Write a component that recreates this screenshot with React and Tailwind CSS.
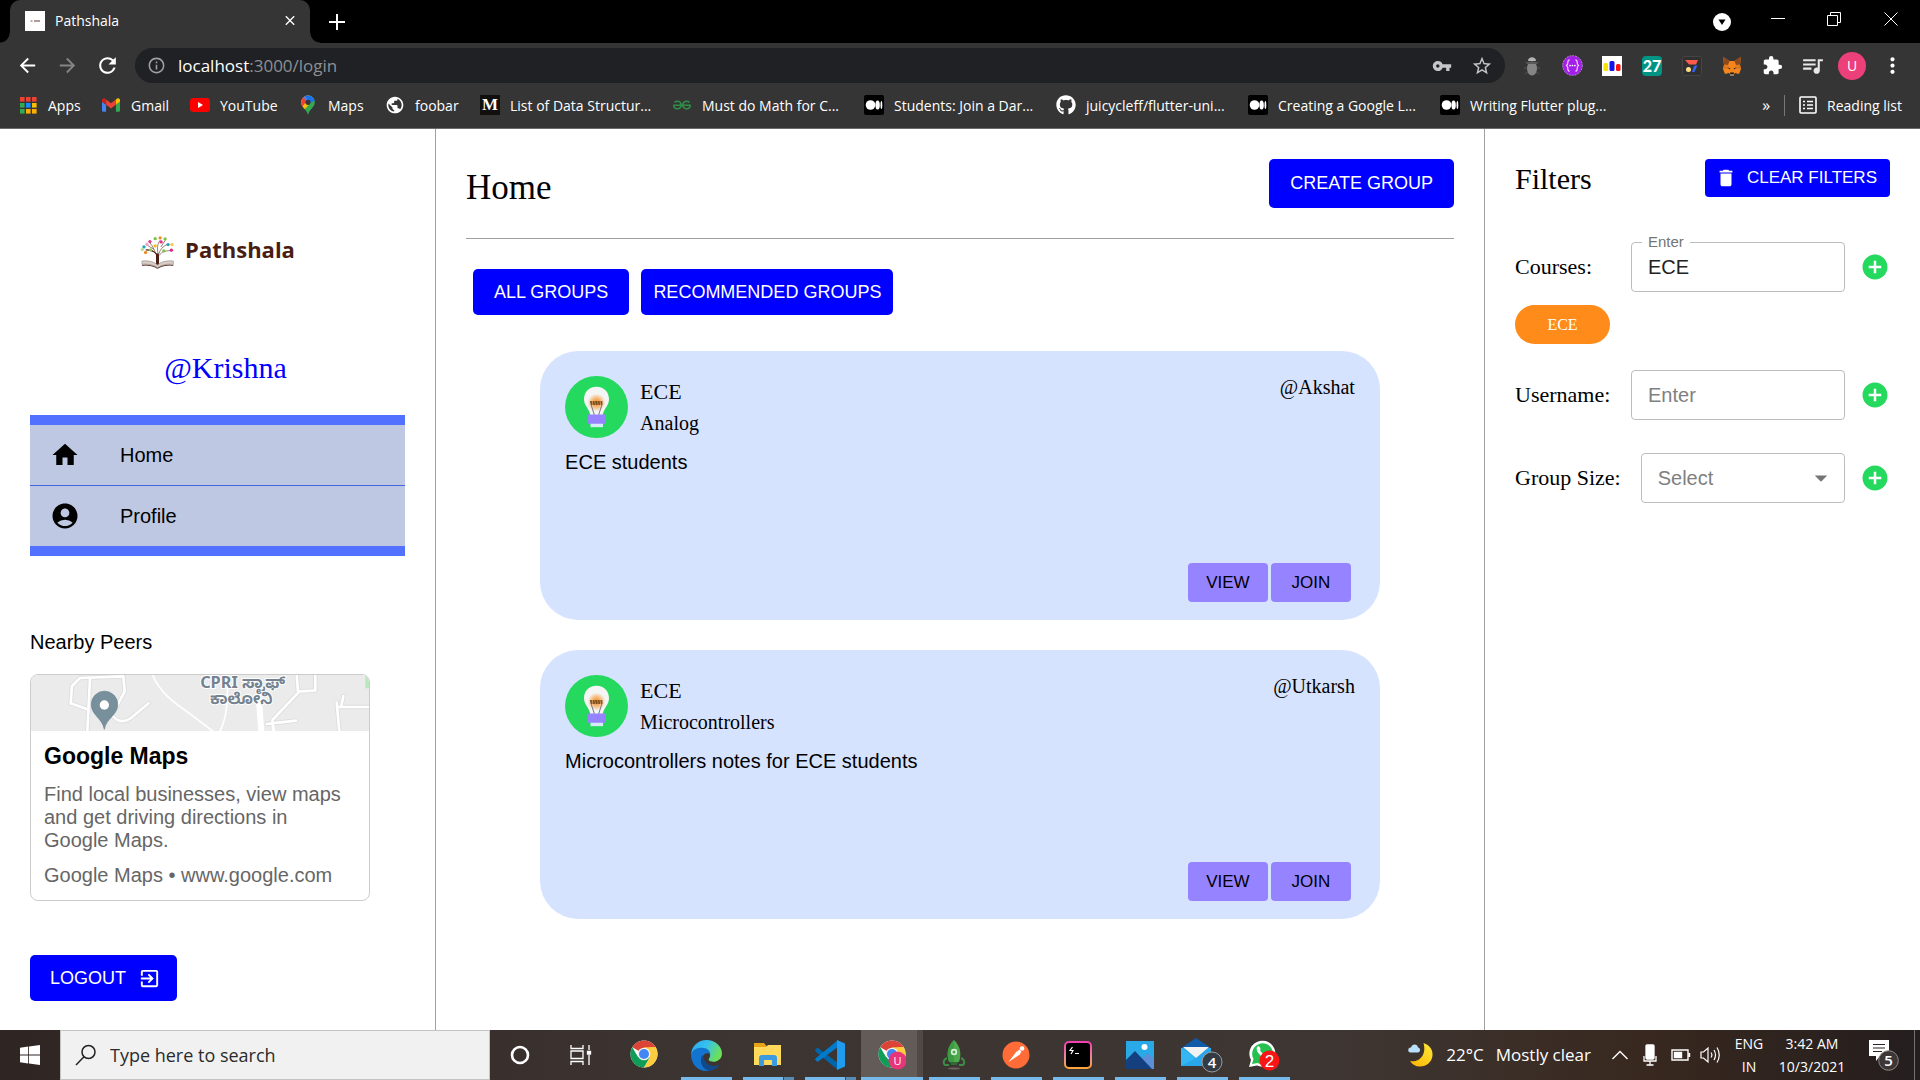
import React, { useState } from "react";
import {
  MdAccountCircle,
  MdAddCircle,
  MdArrowBack,
  MdArrowDropDown,
  MdArrowForward,
  MdClose,
  MdDelete,
  MdExitToApp,
  MdExtension,
  MdHome,
  MdInfoOutline,
  MdMoreVert,
  MdPublic,
  MdQueueMusic,
  MdRefresh,
  MdStarBorder,
  MdVpnKey,
} from "react-icons/md";
import { FaGithub } from "react-icons/fa";
import { SiGeeksforgeeks } from "react-icons/si";

/* ---------- Browser icons ---------- */

function AppsIcon() {
  const colors = ["#ea4335", "#ea4335", "#ea4335", "#34a853", "#1a8cff", "#fbbc04", "#34a853", "#fbaf04", "#fbaf04"];
  return (
    <svg viewBox="0 0 20 20" className="h-5 w-5">
      {colors.map((c, i) => (
        <rect key={i} x={2 + (i % 3) * 6} y={2 + Math.floor(i / 3) * 6} width="4.6" height="4.6" fill={c} />
      ))}
    </svg>
  );
}

function GmailIcon() {
  return (
    <svg viewBox="52 42 88 66" className="h-5 w-[18px]">
      <path fill="#4285f4" d="M58 108h14V74L52 59v43c0 3.32 2.69 6 6 6" />
      <path fill="#34a853" d="M120 108h14c3.32 0 6-2.69 6-6V59l-20 15" />
      <path fill="#fbbc04" d="M120 48v26l20-15v-8c0-7.42-8.47-11.65-14.4-7.2" />
      <path fill="#ea4335" d="M72 74V48l24 18 24-18v26L96 92" />
      <path fill="#c5221f" d="M52 51v8l20 15V48l-5.6-4.2c-5.94-4.45-14.4-.22-14.4 7.2" />
    </svg>
  );
}

function YouTubeIcon() {
  return (
    <svg viewBox="0 0 20 20" className="h-5 w-5">
      <rect x="0" y="3" width="20" height="14" rx="3.5" fill="#ff0000" />
      <path d="M8 7v6l5-3z" fill="#fff" />
    </svg>
  );
}

function MapsIcon() {
  return (
    <svg viewBox="0 0 20 20" className="h-5 w-5">
      <defs>
        <clipPath id="pin">
          <path d="M10 .5A6.8 6.8 0 0 0 3.2 7.3c0 5 5 6.500 6.800 12.700 1.800-6.200 6.800-7.700 6.800-12.700A6.8 6.8 0 0 0 10 .5z" />
        </clipPath>
      </defs>
      <g clipPath="url(#pin)">
        <rect width="20" height="20" fill="#34a853" />
        <path d="M0 0h20L4 17 0 10z" fill="#fbbc04" />
        <path d="M0 0h14L3 13z" fill="#ea4335" />
        <path d="M5 0h15L9 9z" fill="#4285f4" />
        <path d="M6 0h14v4l-8 4z" fill="#1a73e8" />
      </g>
      <circle cx="10" cy="7.3" r="2.6" fill="#353535" />
    </svg>
  );
}

function MediumLetterIcon() {
  return (
    <span className="flex h-5 w-5 items-center justify-center bg-[#12100e] font-['Liberation_Serif',serif] text-[17px] font-bold leading-5 text-white">
      M
    </span>
  );
}

function MediumDotsIcon() {
  return (
    <svg viewBox="0 0 20 20" className="h-5 w-5">
      <rect width="20" height="20" rx="2" fill="#000" />
      <circle cx="6.500" cy="10" r="4.800" fill="#fff" />
      <ellipse cx="13.600" cy="10" rx="2.200" ry="4.600" fill="#fff" />
      <ellipse cx="17.400" cy="10" rx=".9" ry="4" fill="#fff" />
    </svg>
  );
}

const bookmarks = [
  { label: "Apps", icon: <AppsIcon />, width: "w-[83px]" },
  { label: "Gmail", icon: <GmailIcon />, width: "w-[89px]" },
  { label: "YouTube", icon: <YouTubeIcon />, width: "w-[108px]" },
  { label: "Maps", icon: <MapsIcon />, width: "w-[87px]" },
  { label: "foobar", icon: <MdPublic size={22} className="text-white" />, width: "w-[95px]" },
  { label: "List of Data Structur...", icon: <MediumLetterIcon />, width: "w-48" },
  { label: "Must do Math for C...", icon: <SiGeeksforgeeks size={18} className="text-[#2f8d46]" />, width: "w-48" },
  { label: "Students: Join a Dar...", icon: <MediumDotsIcon />, width: "w-48" },
  { label: "juicycleff/flutter-uni...", icon: <FaGithub size={20} className="text-white" />, width: "w-48" },
  { label: "Creating a Google L...", icon: <MediumDotsIcon />, width: "w-48" },
  { label: "Writing Flutter plug...", icon: <MediumDotsIcon />, width: "w-48" },
];

const extensions = [
  {
    name: "Debugger",
    icon: (
      <svg viewBox="0 0 20 24" className="h-6 w-5">
        <g stroke="#555" strokeWidth="1">
          <path d="M3 8l3 2M17 8l-3 2M2 14h4M18 14h-4M3 20l3-2M17 20l-3-2" />
        </g>
        <path d="M6 7c0-5 8-5 8 0z" fill="#b5b5b5" />
        <ellipse cx="10" cy="14.500" rx="5" ry="7" fill="#858585" />
        <path d="M5 8h10v2H5z" fill="#5a5a5a" />
      </svg>
    ),
  },
  {
    name: "GraphQL",
    icon: (
      <svg viewBox="0 0 22 22" className="h-[21px] w-[21px]">
        <circle cx="11" cy="11" r="10.300" fill="#a31ee8" stroke="#d79bf5" strokeWidth=".8" strokeDasharray="2 1" />
        <path d="M8 5c-2 0-2 1.500-2 3.500S5.500 11 4 11c1.500 0 2 .5 2 2.500S6 17 8 17M14 5c2 0 2 1.500 2 3.500s.5 2.500 2 2.500c-1.500 0-2 .5-2 2.500S16 17 14 17" fill="none" stroke="#e9c8fa" strokeWidth="1.300" />
        <g fill="#fff">
          <circle cx="8.500" cy="11" r=".9" />
          <circle cx="11" cy="11" r=".9" />
          <circle cx="13.500" cy="11" r=".9" />
        </g>
      </svg>
    ),
  },
  {
    name: "Charts",
    icon: (
      <svg viewBox="0 0 20 20" className="h-5 w-5">
        <rect width="20" height="20" fill="#fff" />
        <rect x="1.500" y="7" width="4.500" height="8" rx="1.500" fill="#f5e400" />
        <rect x="7.500" y="5" width="5" height="10" rx="1.500" fill="#1414e6" />
        <rect x="14" y="8" width="4.500" height="7" rx="1.500" fill="#ff1010" />
      </svg>
    ),
  },
  {
    name: "Calendar",
    icon: (
      <span className="flex h-5 w-5 items-center justify-center rounded-sm bg-[#009485] font-['Lato',sans-serif] text-[16px] font-black leading-5 text-white">
        27
      </span>
    ),
  },
  {
    name: "Toggl",
    icon: (
      <svg viewBox="0 0 20 20" className="h-5 w-5">
        <rect x=".5" y=".5" width="19" height="19" rx="2" fill="#303030" stroke="#444" />
        <path d="M3 4h13l-2 4.500H7z" fill="#ff5a4a" />
        <circle cx="6.500" cy="13.500" r="2.500" fill="#ffe08a" />
        <path d="M12 10l3.500-1-3 7H10z" fill="#3564f0" />
      </svg>
    ),
  },
  {
    name: "MetaMask",
    icon: (
      <svg viewBox="0 0 20 20" className="h-5 w-5">
        <path d="M1 1l6.500 4h5L19 1l-1 8 1 4-2 5-4-1-1.500 1.500h-3L7 17l-4 1-2-5 1-4z" fill="#f6851b" />
        <path d="M1 1l6.500 4L6 9 2 8.500zM19 1l-6.500 4L14 9l4-.5z" fill="#8e4a1c" />
        <path d="M2 9l5 1-1 3-5 0zM18 9l-5 1 1 3 5 0z" fill="#e2761b" />
        <path d="M5.500 11.500l3 .8-.8 1.200zM14.500 11.500l-3 .8.8 1.200z" fill="#233447" />
        <path d="M8 16.500h4L11.500 18.500h-3z" fill="#161616" />
        <path d="M8 18.500h4v1H8z" fill="#d7c1b3" />
      </svg>
    ),
  },
  { name: "Extensions", icon: <MdExtension size={21} className="text-white" /> },
  { name: "Media", icon: <MdQueueMusic size={25} className="text-[#e8e8e8]" /> },
];

function BrowserChrome() {
  return (
    <header className="bg-[#353535] font-['Open_Sans','Noto_Sans',sans-serif] text-[14px] text-white">
      <div className="flex h-[43px] items-stretch bg-black pl-[10px]">
        <div className="relative flex w-[300px] items-center rounded-t-[10px] bg-[#353535] pb-[2px] pl-[15px] pr-3">
          <span className="absolute bottom-0 -left-[10px] h-[10px] w-[10px] bg-[radial-gradient(circle_at_0_0,transparent_9px,#353535_10px)]" />
          <span className="absolute -right-[10px] bottom-0 h-[10px] w-[10px] bg-[radial-gradient(circle_at_100%_0,transparent_9px,#353535_10px)]" />
          <svg viewBox="0 0 20 20" className="h-5 w-5">
            <rect width="20" height="20" fill="#fff" />
            <path d="M5.500 10h2" stroke="#999" strokeWidth="1.500" />
            <path d="M9 10h6" stroke="#9a7a74" strokeWidth="1.500" />
          </svg>
          <span className="ml-[10px] flex-1">Pathshala</span>
          <button aria-label="Close tab" className="flex w-4 justify-center">
            <MdClose size={17} />
          </button>
        </div>
        <button aria-label="New tab" className="ml-[18px] flex w-[18px] items-center justify-center">
          <svg viewBox="0 0 16 16" className="h-4 w-4" stroke="#fff" strokeWidth="2">
            <path d="M8 0v16M0 8h16" />
          </svg>
        </button>
        <div className="flex-1" />
        <div className="flex items-start">
          <button aria-label="Tab search" className="flex h-[43px] w-14 items-center justify-center">
            <svg viewBox="0 0 18 18" className="h-[18px] w-[18px]">
              <circle cx="9" cy="9" r="9" fill="#fff" />
              <path d="M5.500 6.500h7L9 12z" fill="#000" />
            </svg>
          </button>
          <button aria-label="Minimize" className="flex h-9 w-14 items-center justify-center">
            <svg viewBox="0 0 14 14" className="h-[14px] w-[14px]" stroke="#fff">
              <path d="M0 7.500h14" />
            </svg>
          </button>
          <button aria-label="Restore" className="flex h-[38px] w-14 items-center justify-center">
            <svg viewBox="0 0 14 14" className="h-[14px] w-[14px]" fill="none" stroke="#fff">
              <path d="M.5 3.500h10v10H.5zM3.500 3V.5h10v10H11" />
            </svg>
          </button>
          <button aria-label="Close" className="flex h-[38px] w-[58px] items-center justify-center">
            <svg viewBox="0 0 14 14" className="h-[14px] w-[14px]" fill="none" stroke="#fff">
              <path d="M.5.5l13 13M13.500.5l-13 13" />
            </svg>
          </button>
        </div>
      </div>

      <div className="flex h-[45px] items-center pr-2 pl-[7px]">
        <button aria-label="Back" className="flex w-10 justify-center">
          <MdArrowBack size={23} />
        </button>
        <button aria-label="Forward" className="flex w-10 justify-center text-[#858585]">
          <MdArrowForward size={23} />
        </button>
        <button aria-label="Reload" className="flex w-10 justify-center">
          <MdRefresh size={25} />
        </button>
        <div className="ml-2 flex h-[35px] flex-1 items-center rounded-full bg-[#202124] pr-[3px]">
          <MdInfoOutline size={19} className="mx-3 text-[#9aa0a6]" />
          <a href="#login" className="flex-1 text-[17px] leading-6 text-[#8d9093]">
            <span className="text-white">localhost</span>:3000/login
          </a>
          <button aria-label="Passwords" className="flex w-10 justify-center text-[#c4c7c9]">
            <MdVpnKey size={20} />
          </button>
          <button aria-label="Bookmark this page" className="flex w-10 justify-center text-[#c4c7c9]">
            <MdStarBorder size={22} />
          </button>
        </div>
        <div className="ml-[7px] flex items-center">
          {extensions.map((e) => (
            <button key={e.name} aria-label={e.name} className="flex w-10 items-center justify-center">
              {e.icon}
            </button>
          ))}
          <button aria-label="Account" className="flex w-10 justify-center">
            <span className="h-7 w-7 rounded-full bg-[#ec407a] text-center leading-7">U</span>
          </button>
          <button aria-label="Menu" className="flex w-10 justify-center">
            <MdMoreVert size={25} />
          </button>
        </div>
      </div>

      <nav className="flex h-[41px] items-center border-b border-[#6b6b6b] pb-[6px] pl-[18px]" aria-label="Bookmarks">
        {bookmarks.map((b) => (
          <a key={b.label} href="#bookmark" className={"flex shrink-0 items-center gap-[10px] " + b.width}>
            <span className="flex w-5 shrink-0 justify-center">{b.icon}</span>
            <span className="whitespace-nowrap">{b.label}</span>
          </a>
        ))}
        <div className="flex-1" />
        <button aria-label="More bookmarks" className="mr-[14px] text-[16px]">»</button>
        <a href="#reading" className="flex items-center border-l border-[#777] pl-[14px] pr-[18px]">
          <svg viewBox="0 0 18 18" className="mr-[10px] h-[18px] w-[18px]" fill="none" stroke="#fff" strokeWidth="1.600">
            <rect x="1" y="1" width="16" height="16" rx="1" />
            <path d="M4 5.500h2M8 5.500h6M4 9h2M8 9h6M4 12.500h2M8 12.500h6" />
          </svg>
          Reading list
        </a>
      </nav>
    </header>
  );
}

/* ---------- Left column ---------- */

function TreeLogo() {
  const leaves = [
    [432, 141, "#1fa7b8"], [450, 125, "#e0398a"], [466, 116, "#7cc247"], [481, 114, "#f08a24"], [496, 117, "#7cc247"],
    [505, 134, "#1fa7b8"], [466, 138, "#f5b821"], [484, 126, "#e0398a"], [515, 151, "#d42a7b"], [492, 153, "#7cc247"],
    [437, 158, "#f08a24"], [452, 150, "#8ccf5a"], [517, 134, "#f7c948"], [427, 149, "#b8dc90"], [441, 133, "#f7a6cc"],
  ];
  return (
    <svg viewBox="420 105 106 106" className="h-[35px] w-[35px]">
      <g fill="none" stroke="#6a4035" strokeWidth="4" strokeLinecap="round">
        <path d="M473 196c4-16 2-26-4-34-6-8-14-12-30-12" stroke="#4a1d12" />
        <path d="M467 160c-4-12-8-20-16-30M474 158c-2-14-2-24 6-36M477 162c4-14 12-22 24-28M479 166c8-12 18-12 32-14M462 148l-20-12M484 140l12-18" strokeWidth="2" />
        <path d="M473 198V165" stroke="#4a1d12" strokeWidth="9" />
      </g>
      {leaves.map(([x, y, c], i) => (
        <circle key={i} cx={x} cy={y} r="5" fill={c} />
      ))}
      <path d="M426 184c16-2 34 0 47 12 13-12 32-14 48-12v10c-16-2-34 0-48 10-13-10-32-12-47-10z" fill="#d9cfc9" stroke="#9a8b84" strokeWidth="2" />
      <path d="M426 197c16-2 34 0 47 9 13-9 32-11 48-9" fill="none" stroke="#5f3a2f" strokeWidth="3" />
    </svg>
  );
}

function MapPreview() {
  return (
    <svg viewBox="93 225 1014 168" preserveAspectRatio="xMidYMid slice" className="block h-14 w-full">
      <rect x="93" y="225" width="1014" height="168" fill="#ebebeb" />
      <path d="M1096 225h11v40h-11z" fill="#b9e8c0" />
      <g fill="none" stroke="#dcdcdf" strokeLinejoin="round" strokeLinecap="round">
        <path d="M262 393l8-158M212 310l4-52 24-24 130-5 4 45-26 50M212 310l50 18M340 350c16 18 34 16 50 6l56-46M890 225l4 50 52-4V225M895 278l-78 82M778 300l6 93M800 372l88-10M1107 321h-92M1010 308l8 85M1030 288l-6 30" strokeWidth="13" />
      </g>
      <g fill="none" stroke="#fff" strokeLinejoin="round" strokeLinecap="round">
        <path d="M262 393l8-158M212 310l4-52 24-24 130-5 4 45-26 50M212 310l50 18M340 350c16 18 34 16 50 6l56-46M890 225l4 50 52-4V225M895 278l-78 82 4 33M800 372l88-10M1107 321h-92M1010 308l8 85M1030 288l-6 30" strokeWidth="8" />
        <path d="M458 225c20 50 60 80 110 115l70 53M684 225c-2 90-4 130-24 168" strokeWidth="5" />
        <path d="M776 290l8 103" strokeWidth="18" />
      </g>
      <g fontFamily="'Noto Sans', 'Noto Sans Kannada', sans-serif" fontWeight="700" fill="#74838f" stroke="#fff" strokeWidth="6" paintOrder="stroke" textAnchor="middle">
        <text x="728" y="264" fontSize="49">CPRI ಸ್ಟಾಫ್</text>
        <text x="724" y="311" fontSize="46">ಕಾಲೋನಿ</text>
      </g>
      <path d="M313 388c-6-34-39-42-39-75a39 39 0 0 1 79 0c0 33-34 41-40 75z" fill="#78909c" stroke="#66808c" strokeWidth="2" />
      <circle cx="313" cy="315" r="14" fill="#fff" />
    </svg>
  );
}

function Sidebar() {
  return (
    <aside className="w-[436px] shrink-0 border-r border-[#a0a0a0] px-[30px] pt-[106px] pb-[29px]">
      <a href="#home" className="flex h-[35px] items-center justify-center gap-[10px]">
        <TreeLogo />
        <span className="pb-2 font-['Open_Sans',sans-serif] text-[22px] font-bold leading-[30px] text-[#4a1d12]">Pathshala</span>
      </a>
      <h2 className="mt-20 pl-4 text-center font-['Liberation_Serif',serif] text-[30px] leading-9 text-[#0000ff]">@Krishna</h2>
      <nav className="mt-[29px] border-y-[10px] border-[#5271ff] text-[20px]">
        <a href="#home" className="flex h-[61px] items-center border-b border-[#4565e0] bg-[#bfc8e2] pl-5">
          <MdHome size={30} />
          <span className="ml-10">Home</span>
        </a>
        <a href="#profile" className="flex h-[60px] items-center bg-[#bfc8e2] pl-5">
          <MdAccountCircle size={30} />
          <span className="ml-10">Profile</span>
        </a>
      </nav>
      <h3 className="mt-[74px] text-[20px] leading-6">Nearby Peers</h3>
      <a href="#maps" className="mt-5 block max-w-[340px] overflow-hidden rounded-lg border border-[#cccccc]">
        <MapPreview />
        <div className="px-[13px] pt-[11px] pb-[13px] text-[20px] leading-[23px] text-[#666666]">
          <h4 className="text-[23px] font-bold leading-7 text-black">Google Maps</h4>
          <p className="mt-[13px]">Find local businesses, view maps and get driving directions in Google Maps.</p>
          <p className="mt-3">Google Maps • www.google.com</p>
        </div>
      </a>
      <button className="mt-[54px] flex h-[46px] items-center gap-3 rounded-[5px] bg-[#0000ff] px-5 pr-[16px] text-[18px] text-white">
        LOGOUT
        <MdExitToApp size={23} />
      </button>
    </aside>
  );
}

/* ---------- Middle column ---------- */

function BulbIcon() {
  return (
    <svg viewBox="0 0 63 63" preserveAspectRatio="none" className="h-[62px] w-[63px] shrink-0">
      <defs>
        <radialGradient id="glow">
          <stop offset="0" stopColor="#ee8a1e" />
          <stop offset=".5" stopColor="#f6b877" />
          <stop offset="1" stopColor="#f4f4f4" />
        </radialGradient>
      </defs>
      <circle cx="31.500" cy="31.500" r="31.500" fill="#25d95f" />
      <path d="M31.500 11c-8 0-12.500 6-12.500 12.500 0 6.500 5 9 6.500 16.500h12c1.500-7.500 6.500-10 6.500-16.500C44 17 39.500 11 31.500 11z" fill="#f5f5f5" />
      <circle cx="31.500" cy="27" r="9" fill="url(#glow)" />
      <path d="M25 26.500h13M25.500 28.500h12" stroke="#5a3410" strokeWidth="1.600" strokeDasharray="2 .6" />
      <path d="M26 29l3.500 11M37 29l-3.500 11" stroke="#777" strokeWidth="1" fill="none" />
      <rect x="25.500" y="46" width="12.500" height="6" fill="#d4ecf8" />
      <rect x="22.500" y="39" width="18.500" height="9.500" rx="1" fill="#9683ff" />
    </svg>
  );
}

const groups = [
  { course: "ECE", topic: "Analog", owner: "@Akshat", description: "ECE students" },
  { course: "ECE", topic: "Microcontrollers", owner: "@Utkarsh", description: "Microcontrollers notes for ECE students" },
];

function GroupCard({ group }) {
  return (
    <article className="flex min-h-[269px] flex-col rounded-[38px] bg-[#d6e3ff] px-[25px] pt-[25px] pb-[18px]">
      <div className="flex items-start font-['Liberation_Serif',serif] text-[20px] leading-[22px]">
        <BulbIcon />
        <div className="ml-3 flex-1 pt-[3px]">
          <h3 className="text-[22px] leading-[26px]">{group.course}</h3>
          <p className="mt-[7px]">{group.topic}</p>
        </div>
        <span>{group.owner}</span>
      </div>
      <p className="mt-3 text-[20px] leading-6">{group.description}</p>
      <div className="mt-auto mr-1 flex justify-end gap-[3px] text-[17px]">
        <button className="h-[39px] w-20 rounded bg-[#9683ff]">VIEW</button>
        <button className="h-[39px] w-20 rounded bg-[#9683ff]">JOIN</button>
      </div>
    </article>
  );
}

function Main() {
  return (
    <main className="min-w-0 flex-1 px-[30px] pt-[30px]">
      <div className="flex items-start justify-between border-b border-[#a0a0a0] pb-[30px]">
        <h1 className="pt-[9px] font-['Liberation_Serif',serif] text-[35px] leading-10">Home</h1>
        <button className="h-[49px] rounded-[5px] bg-[#0000ff] px-[21px] text-[18px] text-white">CREATE GROUP</button>
      </div>
      <div className="mt-[30px] ml-[7px] flex gap-3 text-[18px] text-white">
        <button className="h-[46px] rounded-[5px] bg-[#0000ff] px-[21px]">ALL GROUPS</button>
        <button className="h-[46px] rounded-[5px] bg-[#0000ff] px-3">RECOMMENDED GROUPS</button>
      </div>
      <div className="mx-auto mt-9 flex w-[85%] flex-col gap-[30px]">
        {groups.map((g) => (
          <GroupCard key={g.topic} group={g} />
        ))}
      </div>
    </main>
  );
}

/* ---------- Right column ---------- */

function AddButton({ name }) {
  return (
    <button aria-label={name} className="ml-[15px] text-[#25d95f]">
      <MdAddCircle size={30} />
    </button>
  );
}

const fieldLabel = "mr-5 min-w-24 font-['Liberation_Serif',serif] text-[22px] leading-[26px]";
const fieldBox = "h-[50px] w-full rounded border border-[#bdbdbd] bg-white px-4 text-[20px] outline-none";

function Filters() {
  const [course, setCourse] = useState("ECE");
  return (
    <aside className="w-[436px] shrink-0 border-l border-[#a0a0a0] px-[30px] pt-[30px]">
      <div className="flex items-start justify-between">
        <h2 className="pt-[2px] font-['Liberation_Serif',serif] text-[30px] leading-9">Filters</h2>
        <button className="flex h-[38px] items-center rounded bg-[#0000ff] pr-[13px] pl-[10px] text-[17px] text-white">
          <MdDelete size={22} />
          <span className="ml-[10px]">CLEAR FILTERS</span>
        </button>
      </div>

      <div className="mt-[45px] flex items-center">
        <label htmlFor="courses" className={fieldLabel}>Courses:</label>
        <div className="relative min-w-0 flex-1">
          <input id="courses" value={course} onChange={(e) => setCourse(e.target.value)} className={fieldBox + " block text-[#212121]"} />
          <span className="absolute -top-[9px] left-[11px] bg-white px-[6px] text-[15px] leading-[18px] text-[#757575]">Enter</span>
        </div>
        <AddButton name="Add course" />
      </div>
      <button className="mt-[13px] block h-[39px] w-[95px] rounded-full bg-[#ff8c1a] font-['Liberation_Serif',serif] text-[16px] text-white">
        ECE
      </button>

      <div className="mt-[26px] flex items-center">
        <label htmlFor="username" className={fieldLabel}>Username:</label>
        <div className="min-w-0 flex-1">
          <input id="username" placeholder="Enter" className={fieldBox + " block placeholder:text-[#808080]"} />
        </div>
        <AddButton name="Add username" />
      </div>

      <div className="mt-[33px] flex items-center">
        <label htmlFor="size" className={fieldLabel + " whitespace-nowrap"}>Group Size:</label>
        <div className="relative min-w-0 flex-1">
          <select id="size" defaultValue="" className={fieldBox + " block appearance-none text-[#808080]"}>
            <option value="">Select</option>
          </select>
          <MdArrowDropDown size={30} className="pointer-events-none absolute top-[10px] right-[9px] text-[#757575]" />
        </div>
        <AddButton name="Add group size" />
      </div>
    </aside>
  );
}

/* ---------- Taskbar ---------- */

function ChromeLogo({ badge }) {
  return (
    <svg viewBox="0 0 28 30" className="h-[30px] w-7">
      <circle cx="14" cy="14" r="13.500" fill="#fff" />
      <path d="M14 14L2.300 7.250A13.500 13.500 0 0 1 25.700 7.250z" fill="#db4437" />
      <path d="M2.300 7.250A13.500 13.500 0 0 0 14 27.500l6-10.200L8.200 17.300z" fill="#0f9d58" />
      <path d="M25.700 7.250A13.500 13.500 0 0 1 14 27.500l6-10.200V7.250z" fill="#ffcd40" />
      <path d="M14 7.250h11.700L20 17z" fill="#ffcd40" />
      <circle cx="14" cy="14" r="6.300" fill="#f1f1f1" />
      <circle cx="14" cy="14" r="5" fill="#4285f4" />
      {badge && (
        <g>
          <circle cx="19.500" cy="20.500" r="9" fill="#e8357a" />
          <text x="19.500" y="24.500" textAnchor="middle" fontSize="11" fill="#fff" fontFamily="Open Sans, sans-serif">U</text>
        </g>
      )}
    </svg>
  );
}

function EdgeLogo() {
  return (
    <svg viewBox="0 0 30 30" className="h-[31px] w-[31px]">
      <defs>
        <linearGradient id="edgeTop" x1="0" x2="1" y1="0" y2=".4">
          <stop offset="0" stopColor="#2aa7e8" />
          <stop offset=".5" stopColor="#35c1f1" />
          <stop offset="1" stopColor="#6be05a" />
        </linearGradient>
      </defs>
      <path d="M0 15C0 6 7 0 15 0s15 6 15 13c0 5-4 8-8.500 8-4 0-5.500-1.500-3.500-4C20 13 16 9 11 9 5 9 1 12 0 15z" fill="url(#edgeTop)" />
      <path d="M0 14c1-4 5-6.500 10.500-6.500C16 7.500 19 11 18.500 14c-1-2-7-2-7 3.500 0 6 7 10.500 15 7C24 28 20 30 15 30 6 30 0 23 0 14z" fill="#1374d0" />
      <path d="M11.500 14.500C8 18 9 27 17 29.800c5-.4 8.500-3 10.500-6-5 3-14.500 1.500-16-9.300z" fill="#114a8b" />
    </svg>
  );
}

function ExplorerLogo() {
  return (
    <svg viewBox="0 0 28 30" className="h-[30px] w-7">
      <path d="M0 3h10l2.500 3H27v19H0z" fill="#e8a317" />
      <path d="M0 7h12l2-2h13v20H0z" fill="#ffd95c" />
      <path d="M5 26V18q0-3 3-3h12q3 0 3 3v8h-5v-6h-8v6z" fill="#3c9be0" />
    </svg>
  );
}

function CodeLogo() {
  return (
    <svg viewBox="0 0 30 30" className="h-[30px] w-[30px]">
      <path d="M0 10l2.500-2.500L23 23v7L1 12z" fill="#0065a9" />
      <path d="M0 19.500L2.500 22 23 7V0L1 18z" fill="#007acc" />
      <path d="M22 0l8 3.500v23L22 30z" fill="#1f9cf0" />
    </svg>
  );
}

function MongoCompassLogo() {
  return (
    <svg viewBox="0 0 28 30" className="h-[30px] w-7">
      <path d="M7 18c-4 2-4 5-2 7h4M21 18c4 2 4 5 2 7h-4" fill="none" stroke="#3d8b45" strokeWidth="2" />
      <path d="M14 0c6 6 8 13 5 22H9C6 13 8 6 14 0z" fill="#4fa94d" />
      <path d="M14 0c-6 6-8 13-5 22h5z" fill="#3f9a44" />
      <path d="M10 22h8l-1 3h-6z" fill="#2f6b35" />
      <circle cx="14" cy="12" r="3.200" fill="#d8f0d8" />
      <circle cx="14" cy="12" r="1.500" fill="#4fa94d" />
      <ellipse cx="14" cy="28.500" rx="6" ry="1" fill="#6d635f" />
    </svg>
  );
}

function PostmanLogo() {
  return (
    <svg viewBox="0 0 28 28" className="h-7 w-7">
      <circle cx="14" cy="14" r="13.500" fill="#ff6c37" />
      <path d="M6.500 21l8-10.500 3.500 3z" fill="#fff" />
      <path d="M14.500 11l3-2.500 2 2.500-2 2.500z" fill="#fff" />
      <circle cx="20" cy="7.500" r="2.300" fill="#fff" />
    </svg>
  );
}

function TerminalLogo() {
  return (
    <svg viewBox="0 0 28 28" className="h-7 w-7">
      <defs>
        <linearGradient id="hyper" x1="0" x2="0" y1="0" y2="1">
          <stop offset="0" stopColor="#f43fb0" />
          <stop offset=".6" stopColor="#e88a9a" />
          <stop offset="1" stopColor="#ffa53c" />
        </linearGradient>
      </defs>
      <rect x="1" y="1" width="26" height="26" rx="4" fill="#000" stroke="url(#hyper)" strokeWidth="2" />
      <path d="M8.500 6L6 9.500h3L7 13M11 12.500h4" fill="none" stroke="#fff" strokeWidth="1.200" />
    </svg>
  );
}

function PhotosLogo() {
  return (
    <svg viewBox="0 0 28 28" className="h-7 w-7">
      <rect width="28" height="28" fill="#2aa9e8" />
      <path d="M14 28V19l8-7 6 6v10z" fill="#5b8fd8" />
      <path d="M0 19l9-9 17 18H0z" fill="#15407f" />
      <circle cx="18.500" cy="6" r="3" fill="#fff" />
    </svg>
  );
}

function MailLogo() {
  return (
    <svg viewBox="0 0 42 36" className="h-9 w-[42px]">
      <path d="M0 11L15 1l15 10v3H0z" fill="#0f5ba8" />
      <path d="M0 11h30v18H0z" fill="#28a8ea" />
      <path d="M2 10h26L15 21z" fill="#f2f2f2" />
      <path d="M0 11l15 10L0 29z" fill="#35b6f2" />
      <circle cx="31" cy="25" r="10" fill="#333c44" stroke="#9a9a9a" />
      <text x="31" y="31" textAnchor="middle" fontSize="15" fontWeight="600" fill="#fff" fontFamily="Open Sans, sans-serif">4</text>
    </svg>
  );
}

function WhatsAppLogo() {
  return (
    <svg viewBox="0 0 32 32" className="h-8 w-8">
      <path d="M1 28l2-7A13 13 0 1 1 9 26.500z" fill="#fff" />
      <path d="M4 25l1.500-5A10.500 10.500 0 1 1 9.500 24z" fill="#25c04f" />
      <path d="M9 8c2-2 3 0 3.500 2-1 1.500 0 3 3 5 1.500-1.500 4 0 4 1.500-1 3-5 2.500-8-1-2.500-2.500-3.500-5.500-2.500-7.500z" fill="#fff" />
      <circle cx="21.500" cy="21.500" r="10" fill="#f81515" />
      <text x="21.500" y="27.500" textAnchor="middle" fontSize="17" fill="#fff" fontFamily="Liberation Sans, sans-serif">2</text>
    </svg>
  );
}

const tasks = [
  { name: "Chrome", icon: <ChromeLogo /> },
  { name: "Edge", icon: <EdgeLogo />, open: true },
  { name: "File Explorer", icon: <ExplorerLogo />, open: true, stacked: true },
  { name: "Code", icon: <CodeLogo />, open: true, stacked: true },
  { name: "Chrome profile", icon: <ChromeLogo badge />, active: true },
  { name: "Compass", icon: <MongoCompassLogo />, open: true },
  { name: "Postman", icon: <PostmanLogo />, open: true },
  { name: "Terminal", icon: <TerminalLogo />, open: true },
  { name: "Photos", icon: <PhotosLogo />, open: true },
  { name: "Mail", icon: <MailLogo />, open: true },
  { name: "WhatsApp", icon: <WhatsAppLogo />, open: true },
];

function Taskbar() {
  return (
    <footer className="flex h-[50px] items-stretch bg-[linear-gradient(90deg,#2f2523,#3c3431_35%,#3e3632_70%,#38281f_86%,#241e1e)] font-['Open_Sans','Noto_Sans',sans-serif] text-[14px] text-white">
      <button aria-label="Start" className="flex w-[60px] items-center justify-center">
        <svg viewBox="0 0 20 20" className="h-5 w-5" fill="#fff">
          <path d="M0 2.800l8.200-1.200v8H0zM9 1.500L20 0v9.600H9zM0 10.400h8.200v8L0 17.200zM9 10.400h11V20L9 18.500z" />
        </svg>
      </button>
      <label className="flex w-[430px] items-center border border-[#c4c4c4] bg-[#f1f1f1] pl-[14px]">
        <svg viewBox="0 0 22 22" className="h-[22px] w-[22px]" fill="none" stroke="#222" strokeWidth="1.500">
          <circle cx="13.500" cy="8" r="6.500" />
          <path d="M9 12.800L1 21" />
        </svg>
        <input aria-label="Search" placeholder="Type here to search" className="ml-[13px] min-w-0 flex-1 bg-transparent text-[18px] outline-none placeholder:text-[#2b2b2b]" />
      </label>
      <button aria-label="Cortana" className="flex w-[60px] items-center justify-center">
        <svg viewBox="0 0 20 20" className="h-5 w-5">
          <circle cx="10" cy="10" r="8" fill="none" stroke="#fff" strokeWidth="2.600" />
        </svg>
      </button>
      <button aria-label="Task view" className="mr-[2px] flex w-[61px] items-center justify-center">
        <svg viewBox="0 0 22 20" className="h-5 w-[22px]" fill="none" stroke="#fff" strokeWidth="1.300">
          <path d="M1 0v3.500h12V0M1 20v-3.500h12V20M1 6h12v7.500H1zM19 0v5M19 10v10" />
          <path d="M17.500 6.500h3v2.500h-3z" fill="#fff" />
        </svg>
      </button>
      {tasks.map((t) => (
        <button
          key={t.name}
          aria-label={t.name}
          className={"relative flex w-[62px] items-center justify-center " + (t.active ? "bg-[linear-gradient(90deg,#625b58_56px,#514945_56px)]" : "")}
        >
          {t.icon}
          {t.open && <span className="absolute bottom-0 left-[6px] h-[3px] w-[51px] bg-[#76b9ed]" />}
          {t.stacked && <span className="absolute right-[5px] bottom-0 h-[3px] w-[11px] border-l border-[#3c4a56] bg-[#5a8bb3]" />}
          {t.active && <span className="absolute inset-x-0 bottom-0 h-[3px] bg-[#76b9ed]" />}
        </button>
      ))}
      <div className="flex-1" />
      <div className="flex items-center">
        <button className="flex items-center text-[17px]">
          <svg viewBox="0 0 25 24" className="mr-[13px] h-6 w-[25px]">
            <defs>
              <linearGradient id="moon" x1="0" x2="1" y1="1" y2="0">
                <stop offset="0" stopColor="#ffb300" />
                <stop offset="1" stopColor="#ffe93b" />
              </linearGradient>
            </defs>
            <path d="M15.500 0C22 2 25 7 24.500 12.500 24 19 18.500 23.500 12 23.500c-4.500 0-8-2-10-5.500C11 20 19 12 15.500 0z" fill="url(#moon)" />
            <path d="M2.500 9.500a2.500 2.500 0 0 1 .5-5c1-4 6.500-4 7 0 3 .5 2.500 5 0 5z" fill="#b8e0fb" />
          </svg>
          22°C
          <span className="ml-3">Mostly clear</span>
        </button>
        <button aria-label="Hidden icons" className="ml-5 flex w-[18px] justify-center">
          <svg viewBox="0 0 16 10" className="h-[10px] w-4" fill="none" stroke="#fff" strokeWidth="1.400">
            <path d="M.5 9L8 1.500 15.500 9" />
          </svg>
        </button>
        <svg viewBox="0 0 14 22" className="ml-[14px] h-[22px] w-[14px]" fill="none" stroke="#fff" strokeWidth="1.300">
          <rect x="3" y="1" width="8" height="14" rx="1" fill="#fff" />
          <path d="M1 12v5h12v-5M7 17v4M3.500 21h7" />
        </svg>
        <svg viewBox="0 0 20 12" className="ml-[14px] h-3 w-5" fill="none" stroke="#fff" strokeWidth="1.400">
          <path d="M1 1h16v10H1zM18.500 4v4" />
          <path d="M3.500 3.500h7v5h-7z" fill="#fff" />
        </svg>
        <svg viewBox="0 0 21 18" className="ml-[9px] h-[18px] w-[21px]" fill="none" stroke="#fff" strokeWidth="1.200">
          <path d="M1 6h2.500L8 2v14l-4.500-4H1z" />
          <path d="M11 6.500q1.800 2.500 0 5M14 4q3 5 0 10M17 1.500q4.500 7.500 0 15" />
        </svg>
        <button className="ml-3 w-8 text-center leading-[23px]">
          ENG
          <br />
          IN
        </button>
        <button className="ml-3 w-[70px] text-center leading-[23px]">
          3:42 AM
          <br />
          10/3/2021
        </button>
        <button aria-label="Notifications" className="ml-[22px] flex h-full items-center">
          <svg viewBox="0 0 30 32" className="h-8 w-[30px]">
            <path d="M0 1h20v16h-9l-4 5v-5H0z" fill="#fff" />
            <path d="M4 5.500h12M4 9h12M4 12.500h9" stroke="#2a2221" strokeWidth="1.200" />
            <circle cx="19.500" cy="21.500" r="9.800" fill="#3c3736" stroke="#8d8886" />
            <text x="19.500" y="27" textAnchor="middle" fontSize="15" fontWeight="600" fill="#fff" fontFamily="Open Sans, sans-serif">5</text>
          </svg>
        </button>
        <span className="ml-[15px] h-[50px] w-[6px] border-l border-[#77706e]" />
      </div>
    </footer>
  );
}

export default function App() {
  return (
    <div className="flex min-h-screen flex-col bg-white font-['Liberation_Sans',Arial,sans-serif] text-black">
      <BrowserChrome />
      <div className="flex flex-1">
        <Sidebar />
        <Main />
        <Filters />
      </div>
      <Taskbar />
    </div>
  );
}
